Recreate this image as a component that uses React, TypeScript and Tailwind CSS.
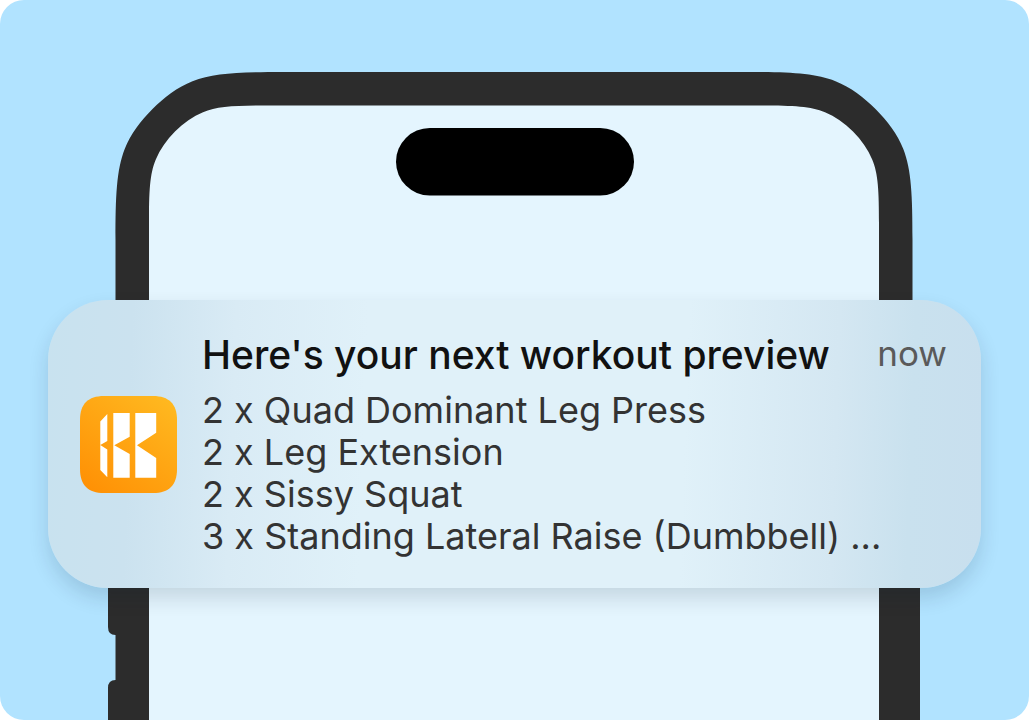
const workout = [
  '2 x Quad Dominant Leg Press',
  '2 x Leg Extension',
  '2 x Sissy Squat',
  '3 x Standing Lateral Raise (Dumbbell) ...',
];

function Phone() {
  return (
    <svg
      className="absolute inset-0 h-full w-full"
      viewBox="0 0 1029 720"
      preserveAspectRatio="xMidYMin slice"
      aria-hidden="true"
    >
      <path
        d="M108 720V688Q108 680 115.500 680V635Q108 635 108 627V560H115.500V240C115.500 196 116.500 170 124.700 149C130.500 134 141 120.500 152.500 109C164 97.500 177.500 87 192.500 81.200C213.500 73 239.500 72 283.500 72H744.500C788.500 72 814.500 73 835.500 81.200C850.500 87 864 97.500 875.500 109C887 120.500 897.500 134 903.300 149C911.500 170 912.500 196 912.500 240V560H920V720Z"
        fill="#2c2c2c"
      />
      <path
        d="M149 720V223.500C149 191.500 149.800 173.500 155.800 159.500C160 149.500 166.500 140 175 131.500C183.500 123 193 116.500 203 112.300C217 106.300 235 105.500 267 105.500H761C793 105.500 811 106.300 825 112.300C835 116.500 844.500 123 853 131.500C861.500 140 868 149.500 872.200 159.500C878.200 173.500 879 191.500 879 223.500V720Z"
        fill="#e4f5fe"
      />
      <rect x="396" y="128" width="238" height="67.500" rx="33.750" fill="#000" />
    </svg>
  );
}

function AppIcon() {
  return (
    <svg className="size-[97px] shrink-0" viewBox="0 0 97 97" role="img" aria-label="App icon">
      <defs>
        <linearGradient id="icon-fill" x1="0.15" y1="1" x2="0.9" y2="0">
          <stop offset="0" stopColor="#ff9105" />
          <stop offset="1" stopColor="#ffb920" />
        </linearGradient>
      </defs>
      <path
        d="M24 0H73C89 0 97 8 97 24V73C97 89 89 97 73 97H24C8 97 0 89 0 73V24C0 8 8 0 24 0Z"
        fill="url(#icon-fill)"
      />
      <path
        d="M20.300 25.500L27.300 18V45L20.300 49L27.300 53.500V81.300L20.300 74ZM33.300 17H49.700V40.700L34.300 49.300L49.700 58V81.700H33.300ZM55.300 17H76.200V36.700L57 49.300L76.200 62V81.700H55.300Z"
        fill="#fff"
      />
    </svg>
  );
}

export default function App() {
  return (
    <div className="min-h-screen bg-white font-['Inter',sans-serif]">
      <main className="relative min-h-screen overflow-hidden rounded-3xl bg-[#b1e3ff] px-12 pt-[300px]">
        <Phone />
        <article className="relative flex items-center rounded-[60px] bg-linear-[92deg,#c8e2ef_0%,#cbe2ef_9%,#d9ebf5_20%,#e0f1f9_34%,#e0f1f9_68%,#d4e7f2_84%,#c9e1ee_92%,#c8dfee_100%] py-[31px] pr-[34px] pl-8 shadow-[0_10px_20px_rgba(0,30,50,0.14)]">
          <AppIcon />
          <div className="ml-[25px] min-w-0 flex-1">
            <header className="flex items-start justify-between">
              <h1 className="text-[39px] leading-[48px] font-medium text-[#111]">
                Here's your next workout preview
              </h1>
              <time className="text-[35px] leading-[44px] text-[#5a5a5a]">now</time>
            </header>
            <ul className="mt-2.5 text-[36px] leading-[42px] text-[#333]">
              {workout.map((exercise) => (
                <li key={exercise}>{exercise}</li>
              ))}
            </ul>
          </div>
        </article>
      </main>
    </div>
  );
}
